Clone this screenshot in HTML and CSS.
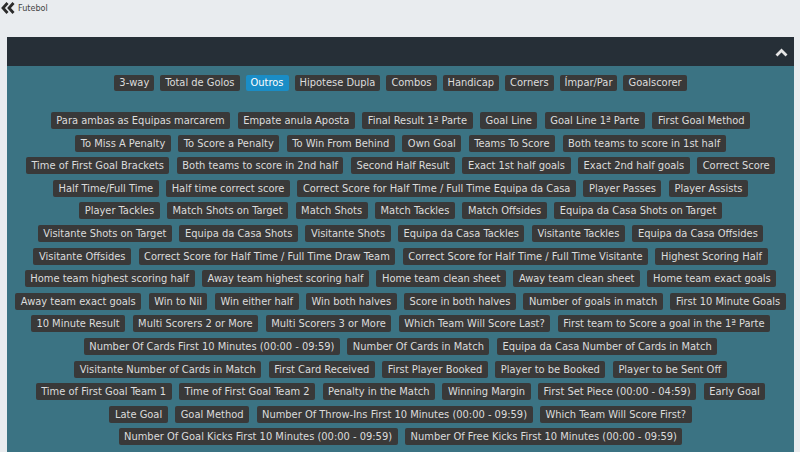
FILE: index.html
```html
<!DOCTYPE html>
<html lang="pt">
<head>
    <meta charset="UTF-8">
    <meta name="viewport" content="width=device-width, initial-scale=1.0">
    <title>Futebol - Outros</title>
    <link rel="stylesheet" href="styles.css">
</head>
<body>
    <div class="crumb">
        <a href="#" class="back">
            <svg width="14" height="12" viewBox="0 0 14 12"><path d="M6.5 1 L2 6 L6.5 11 M12.5 1 L8 6 L12.5 11" fill="none" stroke="#2b2b2b" stroke-width="2.8"/></svg>
            <span>Futebol</span>
        </a>
    </div>

    <div class="panel">
        <div class="panel-head">
            <svg class="collapse" width="13" height="9" viewBox="0 0 13 9"><path d="M1.5 7.5 L6.5 2.5 L11.5 7.5" fill="none" stroke="#e6e6e6" stroke-width="2.8"/></svg>
        </div>
        <div class="panel-body">
            <div class="tabs">
                <a href="#" class="tab">3-way</a>
                <a href="#" class="tab">Total de Golos</a>
                <a href="#" class="tab active">Outros</a>
                <a href="#" class="tab">Hipotese Dupla</a>
                <a href="#" class="tab">Combos</a>
                <a href="#" class="tab">Handicap</a>
                <a href="#" class="tab">Corners</a>
                <a href="#" class="tab">Ímpar/Par</a>
                <a href="#" class="tab">Goalscorer</a>
            </div>

            <div class="markets">
                <div class="row">
                    <a href="#" class="tag">Para ambas as Equipas marcarem</a>
                    <a href="#" class="tag">Empate anula Aposta</a>
                    <a href="#" class="tag">Final Result 1ª Parte</a>
                    <a href="#" class="tag">Goal Line</a>
                    <a href="#" class="tag">Goal Line 1ª Parte</a>
                    <a href="#" class="tag">First Goal Method</a>
                </div>
                <div class="row">
                    <a href="#" class="tag">To Miss A Penalty</a>
                    <a href="#" class="tag">To Score a Penalty</a>
                    <a href="#" class="tag">To Win From Behind</a>
                    <a href="#" class="tag">Own Goal</a>
                    <a href="#" class="tag">Teams To Score</a>
                    <a href="#" class="tag">Both teams to score in 1st half</a>
                </div>
                <div class="row">
                    <a href="#" class="tag">Time of First Goal Brackets</a>
                    <a href="#" class="tag">Both teams to score in 2nd half</a>
                    <a href="#" class="tag">Second Half Result</a>
                    <a href="#" class="tag">Exact 1st half goals</a>
                    <a href="#" class="tag">Exact 2nd half goals</a>
                    <a href="#" class="tag">Correct Score</a>
                </div>
                <div class="row">
                    <a href="#" class="tag">Half Time/Full Time</a>
                    <a href="#" class="tag">Half time correct score</a>
                    <a href="#" class="tag">Correct Score for Half Time / Full Time Equipa da Casa</a>
                    <a href="#" class="tag">Player Passes</a>
                    <a href="#" class="tag">Player Assists</a>
                </div>
                <div class="row">
                    <a href="#" class="tag">Player Tackles</a>
                    <a href="#" class="tag">Match Shots on Target</a>
                    <a href="#" class="tag">Match Shots</a>
                    <a href="#" class="tag">Match Tackles</a>
                    <a href="#" class="tag">Match Offsides</a>
                    <a href="#" class="tag">Equipa da Casa Shots on Target</a>
                </div>
                <div class="row">
                    <a href="#" class="tag">Visitante Shots on Target</a>
                    <a href="#" class="tag">Equipa da Casa Shots</a>
                    <a href="#" class="tag">Visitante Shots</a>
                    <a href="#" class="tag">Equipa da Casa Tackles</a>
                    <a href="#" class="tag">Visitante Tackles</a>
                    <a href="#" class="tag">Equipa da Casa Offsides</a>
                </div>
                <div class="row">
                    <a href="#" class="tag">Visitante Offsides</a>
                    <a href="#" class="tag">Correct Score for Half Time / Full Time Draw Team</a>
                    <a href="#" class="tag">Correct Score for Half Time / Full Time Visitante</a>
                    <a href="#" class="tag">Highest Scoring Half</a>
                </div>
                <div class="row">
                    <a href="#" class="tag">Home team highest scoring half</a>
                    <a href="#" class="tag">Away team highest scoring half</a>
                    <a href="#" class="tag">Home team clean sheet</a>
                    <a href="#" class="tag">Away team clean sheet</a>
                    <a href="#" class="tag">Home team exact goals</a>
                </div>
                <div class="row">
                    <a href="#" class="tag">Away team exact goals</a>
                    <a href="#" class="tag">Win to Nil</a>
                    <a href="#" class="tag">Win either half</a>
                    <a href="#" class="tag">Win both halves</a>
                    <a href="#" class="tag">Score in both halves</a>
                    <a href="#" class="tag">Number of goals in match</a>
                    <a href="#" class="tag">First 10 Minute Goals</a>
                </div>
                <div class="row">
                    <a href="#" class="tag">10 Minute Result</a>
                    <a href="#" class="tag">Multi Scorers 2 or More</a>
                    <a href="#" class="tag">Multi Scorers 3 or More</a>
                    <a href="#" class="tag">Which Team Will Score Last?</a>
                    <a href="#" class="tag">First team to Score a goal in the 1ª Parte</a>
                </div>
                <div class="row">
                    <a href="#" class="tag">Number Of Cards First 10 Minutes (00:00 - 09:59)</a>
                    <a href="#" class="tag">Number Of Cards in Match</a>
                    <a href="#" class="tag">Equipa da Casa Number of Cards in Match</a>
                </div>
                <div class="row">
                    <a href="#" class="tag">Visitante Number of Cards in Match</a>
                    <a href="#" class="tag">First Card Received</a>
                    <a href="#" class="tag">First Player Booked</a>
                    <a href="#" class="tag">Player to be Booked</a>
                    <a href="#" class="tag">Player to be Sent Off</a>
                </div>
                <div class="row">
                    <a href="#" class="tag">Time of First Goal Team 1</a>
                    <a href="#" class="tag">Time of First Goal Team 2</a>
                    <a href="#" class="tag">Penalty in the Match</a>
                    <a href="#" class="tag">Winning Margin</a>
                    <a href="#" class="tag">First Set Piece (00:00 - 04:59)</a>
                    <a href="#" class="tag">Early Goal</a>
                </div>
                <div class="row">
                    <a href="#" class="tag">Late Goal</a>
                    <a href="#" class="tag">Goal Method</a>
                    <a href="#" class="tag">Number Of Throw-Ins First 10 Minutes (00:00 - 09:59)</a>
                    <a href="#" class="tag">Which Team Will Score First?</a>
                </div>
                <div class="row">
                    <a href="#" class="tag">Number Of Goal Kicks First 10 Minutes (00:00 - 09:59)</a>
                    <a href="#" class="tag">Number Of Free Kicks First 10 Minutes (00:00 - 09:59)</a>
                </div>
            </div>
        </div>
    </div>
</body>
</html>
```

FILE: styles.css
```css
body {
    margin: 0;
    padding: 0;
    background-color: #e9ecef;
    font-family: "DejaVu Sans Condensed", "DejaVu Sans", Verdana, sans-serif;
    height: 452px;
    overflow: hidden;
}
a {
    text-decoration: none;
}
.crumb {
    height: 37px;
    padding: 2px 0 0 1px;
    box-sizing: border-box;
}
.back {
    display: flex;
    align-items: center;
    gap: 3px;
    color: #444;
    font-size: 9px;
}
.panel {
    margin-left: 7px;
    width: 787px;
}
.panel-head {
    height: 29px;
    background-color: #262f37;
    display: flex;
    align-items: center;
    justify-content: flex-end;
    padding-right: 6px;
}
.panel-head .collapse {
    margin-top: 2px;
}
.panel-body {
    background-color: #3b7383;
    height: 386px;
    box-sizing: border-box;
    padding-top: 9px;
}
.tabs {
    display: flex;
    justify-content: center;
    gap: 6px;
    margin-bottom: 21px;
}
.tab {
    font-family: "Liberation Sans Narrow", "DejaVu Sans Condensed", sans-serif;
    font-size: 11px;
    line-height: 16px;
    height: 16px;
    padding: 0 5px;
    background-color: #393939;
    color: #ddd;
    border-radius: 2px;
}
.tab.active {
    background-color: #1a8dc6;
    color: #fff;
}
.markets {
    display: flex;
    flex-direction: column;
    gap: 5.6px;
}
.row {
    display: flex;
    justify-content: center;
    gap: 7.5px;
}
.tag {
    font-size: 11px;
    line-height: 17px;
    height: 17px;
    padding: 0 5.5px;
    background-color: #393939;
    color: #dcdcdc;
    border-radius: 2px;
    white-space: nowrap;
}
```
